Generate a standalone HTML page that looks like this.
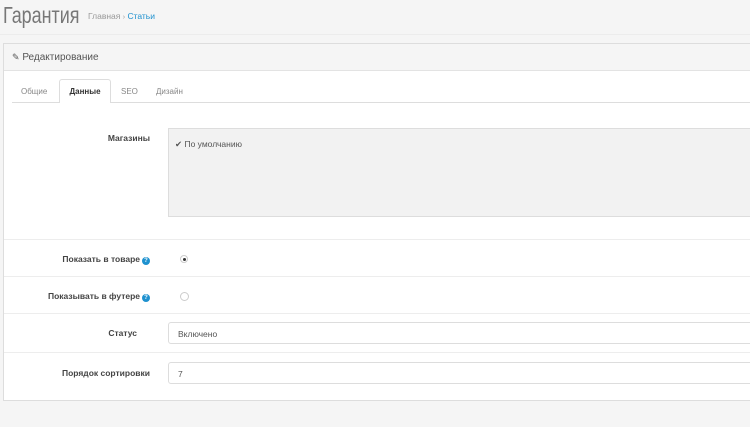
<!DOCTYPE html><html><head><meta charset="utf-8"><style>
body{margin:0;width:750px;height:427px;overflow:hidden;background:#f5f5f5;font-family:"Liberation Sans",sans-serif;position:relative;color:#555}
.a{position:absolute}
.lbl{position:absolute;font-size:8.5px;font-weight:bold;color:#444;text-align:right}
.sep{position:absolute;left:4px;right:0;height:1px;background:#ededed}
.inp{position:absolute;left:168px;right:-5px;height:22px;border:1px solid #ddd;border-radius:3px;background:#fff;font-size:8.5px;line-height:22px;padding-left:9px;box-sizing:border-box;color:#555}
.q{display:inline-block;width:8px;height:8px;border-radius:50%;background:#1e91cf;color:#fff;font-size:6px;line-height:8px;text-align:center;vertical-align:0px;margin-left:2px}
</style></head><body>
<div class="a" style="left:3px;top:2px;font-size:23px;color:#777;transform:scaleX(0.78);transform-origin:0 0">Гарантия</div>
<div class="a" style="left:88px;top:11px;font-size:8.5px;color:#999">Главная <span style="font-size:7px">›</span> <span style="color:#1e91cf">Статьи</span></div>
<div class="a" style="left:0;right:0;top:34px;height:1px;background:#ececec"></div>
<div class="a" style="left:3px;right:-5px;top:43px;height:358px;background:#fff;border:1px solid #ddd;box-sizing:border-box">
 <div style="height:26px;background:#f5f5f5;border-bottom:1px solid #e3e3e3;font-size:10px;line-height:26px;padding-left:8px;color:#555"><span style="font-size:9px">✎</span> Редактирование</div>
</div>
<div class="a" style="left:12px;right:0;top:102px;height:1px;background:#ddd"></div>
<div class="a" style="left:21px;top:87px;font-size:8px;color:#888">Общие</div>
<div class="a" style="left:59px;top:79px;width:52px;height:24px;background:#fff;border:1px solid #ddd;border-bottom:none;border-radius:3px 3px 0 0;box-sizing:border-box;font-size:8px;font-weight:bold;color:#333;text-align:center;line-height:24px">Данные</div>
<div class="a" style="left:121px;top:87px;font-size:8px;color:#888">SEO</div>
<div class="a" style="left:156px;top:87px;font-size:8px;color:#888">Дизайн</div>
<div class="lbl" style="right:600px;top:133px">Магазины</div>
<div class="a" style="left:168px;right:-5px;top:128px;height:89px;background:#f2f2f2;border:1px solid #ddd;box-sizing:border-box;font-size:8.5px;color:#555;padding:10px 0 0 6px">✔ По умолчанию</div>
<div class="sep" style="top:239px"></div>
<div class="lbl" style="right:600px;top:254px">Показать в товаре<span class="q">?</span></div>
<div class="a" style="left:180px;top:255px;width:8px;height:8px;border:1px solid #ccc;border-radius:50%;box-sizing:border-box;background:#fff"><div style="margin:1.5px;width:3px;height:3px;border-radius:50%;background:#333"></div></div>
<div class="sep" style="top:276px"></div>
<div class="lbl" style="right:600px;top:291px">Показывать в футере<span class="q">?</span></div>
<div class="a" style="left:180px;top:292px;width:9px;height:9px;border:1px solid #ccc;border-radius:50%;box-sizing:border-box;background:#fff"></div>
<div class="sep" style="top:313px"></div>
<div class="lbl" style="right:613px;top:328px">Статус</div>
<div class="inp" style="top:322px">Включено</div>
<div class="sep" style="top:352px"></div>
<div class="lbl" style="right:600px;top:368px">Порядок сортировки</div>
<div class="inp" style="top:362px">7</div>
</body></html>
